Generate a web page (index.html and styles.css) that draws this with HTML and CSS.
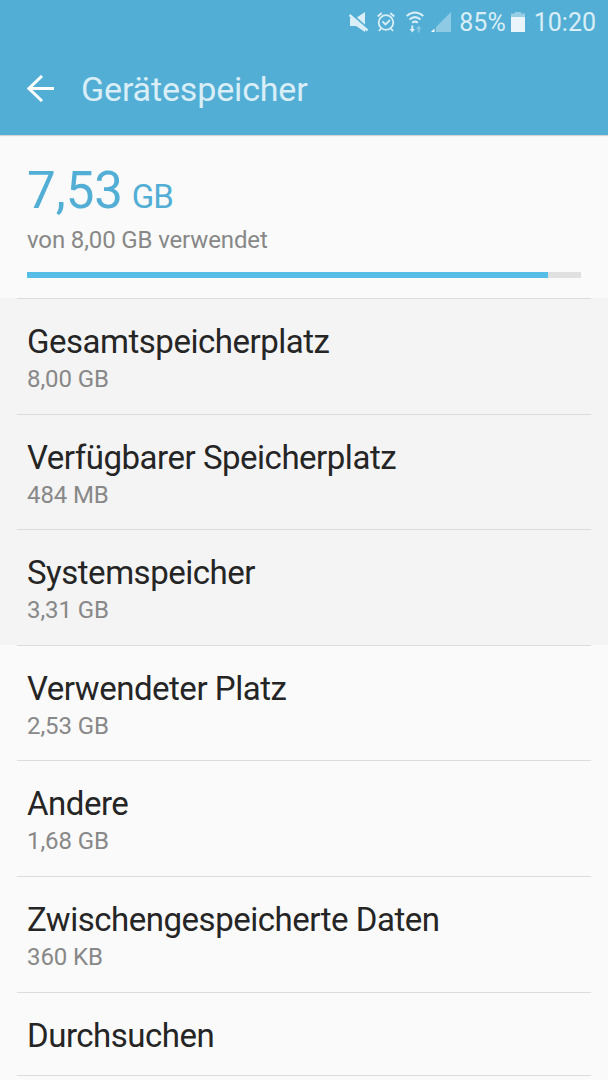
FILE: index.html
```html
<!DOCTYPE html>
<html lang="de">
<head>
  <meta charset="UTF-8">
  <meta name="viewport" content="width=device-width, initial-scale=1.0">
  <title>Gerätespeicher</title>
  <link rel="stylesheet" href="styles.css">
</head>
<body>
  <header>
    <div class="status-bar">
      <svg class="icon-mute" width="20" height="22" viewBox="0 0 20 22"><path d="M1 7h6l9-6v20l-9-6H1z" fill="currentColor"/><path d="M2 2.500L20 18.500" stroke="#52aed5" stroke-width="2"/><path d="M0.500 4L18.500 19.500" stroke="currentColor" stroke-width="2.400"/></svg>
      <svg class="icon-alarm" width="18" height="20" viewBox="0 0 18 20" fill="none" stroke="currentColor" stroke-width="1.800"><circle cx="9" cy="10.500" r="7.300"/><path d="M5.500 9.500l3 3 4.500-4.500M.7 4.500l4-3.500M17.300 4.500l-4-3.500M4 16.500l-2 2.500M14 16.500l2 2.500"/></svg>
      <svg class="icon-wifi" width="18" height="22" viewBox="0 0 18 22" fill="none" stroke="currentColor" stroke-width="2"><path d="M.7 5q8.300-7 16.600 0M3.500 8.500q5.500-4.800 11 0M6.200 11.800q2.800-2.400 5.600 0"/><path d="M3.500 18h5.500l-2.750 3.500zM5.300 14.500h2V18h-2z" fill="currentColor" stroke="none"/><path d="M10 18h5.500l-2.750-3.500zM11.700 18h2v3.500h-2z" fill="currentColor" stroke="none" opacity=".4"/></svg>
      <svg class="icon-signal" width="20" height="21" viewBox="0 0 20 21"><path d="M5 21V16L20 1v20z" fill="currentColor" opacity=".45"/><path d="M0 21l3.500-3.500V21z" fill="#fff"/></svg>
      <span class="battery-text">85%</span>
      <svg class="icon-battery" width="14" height="20" viewBox="0 0 14 20"><path d="M4 0h6v1.500h4V5H0V1.500h4z" fill="currentColor" opacity=".5"/><path d="M0 5h14v15H0z" fill="#e9f5fa"/></svg>
      <span class="clock">10:20</span>
    </div>
    <div class="title-bar">
      <svg class="icon-back" width="27" height="27" viewBox="0 0 27 27"><path d="M15 1L2 13.500 15 26M2 13.500h25" fill="none" stroke="currentColor" stroke-width="3"/></svg>
      <h1>Gerätespeicher</h1>
    </div>
  </header>

  <section class="summary">
    <div class="used">7,53 <span>GB</span></div>
    <div class="total">von 8,00 GB verwendet</div>
    <div class="progress"><div class="progress-fill" style="width: 94%"></div></div>
  </section>

  <ul class="storage-list">
    <li class="item disabled"><div class="name">Gesamtspeicherplatz</div><div class="size">8,00 GB</div></li>
    <li class="item disabled"><div class="name">Verfügbarer Speicherplatz</div><div class="size">484 MB</div></li>
    <li class="item disabled"><div class="name">Systemspeicher</div><div class="size">3,31 GB</div></li>
    <li class="item"><div class="name">Verwendeter Platz</div><div class="size">2,53 GB</div></li>
    <li class="item"><div class="name">Andere</div><div class="size">1,68 GB</div></li>
    <li class="item"><div class="name">Zwischengespeicherte Daten</div><div class="size">360 KB</div></li>
    <li class="item single"><div class="name">Durchsuchen</div></li>
    <li class="item last"></li>
  </ul>
</body>
</html>
```

FILE: styles.css
```css
* {
  box-sizing: border-box;
}

body {
  margin: 0;
  font-family: Roboto, sans-serif;
  background: #fafafa;
  color: #252525;
}

header {
  height: 135px;
  background: #52aed5;
  color: #d9eef7;
  box-shadow: 0 1px 1px rgba(0, 0, 0, 0.15);
}

.status-bar {
  display: flex;
  align-items: center;
  justify-content: flex-end;
  height: 43px;
  padding-right: 12px;
  font-size: 25px;
}

.icon-mute {
  margin-right: 1px;
}

.icon-alarm {
  margin-left: 7px;
}

.icon-wifi {
  margin-left: 11px;
}

.icon-signal {
  margin-left: 7px;
}

.battery-text {
  margin-left: 8px;
}

.icon-battery {
  margin-left: 5px;
}

.battery-text,
.clock {
  padding-top: 2px;
}

.clock {
  margin-left: 9px;
}

.title-bar {
  display: flex;
  align-items: center;
  height: 92px;
  padding-left: 27px;
}

.icon-back {
  margin-top: -2px;
  color: #fff;
}

h1 {
  margin: 0 0 0 27px;
  font-size: 34px;
  font-weight: 400;
  letter-spacing: -0.15px;
}

.summary {
  height: 163px;
  padding: 26px 27px 0;
}

.used {
  height: 59px;
  font-size: 51px;
  line-height: 59px;
  color: #52aed5;
}

.used span {
  margin-left: -4px;
  font-size: 33px;
  line-height: 1;
  letter-spacing: -0.8px;
}

.total {
  margin-top: 5px;
  font-size: 24px;
  line-height: 30px;
  letter-spacing: -0.13px;
  color: #888;
}

.progress {
  height: 6px;
  margin-top: 17px;
  background: #e0e0e0;
}

.progress-fill {
  height: 100%;
  background: #55bde6;
}

.storage-list {
  margin: 0;
  padding: 0;
  list-style: none;
}

.item {
  height: 115.6px;
  padding: 24px 27px 0;
  background: linear-gradient(#dcdcdc, #dcdcdc) 17px 0 / calc(100% - 34px) 1px no-repeat;
}

.disabled {
  background-color: #f4f4f4;
}

.single {
  height: 83.4px;
}

.last {
  height: 5px;
  padding: 0;
}

.name {
  font-size: 33px;
  line-height: 39px;
  letter-spacing: -0.48px;
}

.size {
  margin-top: 3px;
  font-size: 24px;
  line-height: 30px;
  letter-spacing: -0.1px;
  color: #888;
}
```
